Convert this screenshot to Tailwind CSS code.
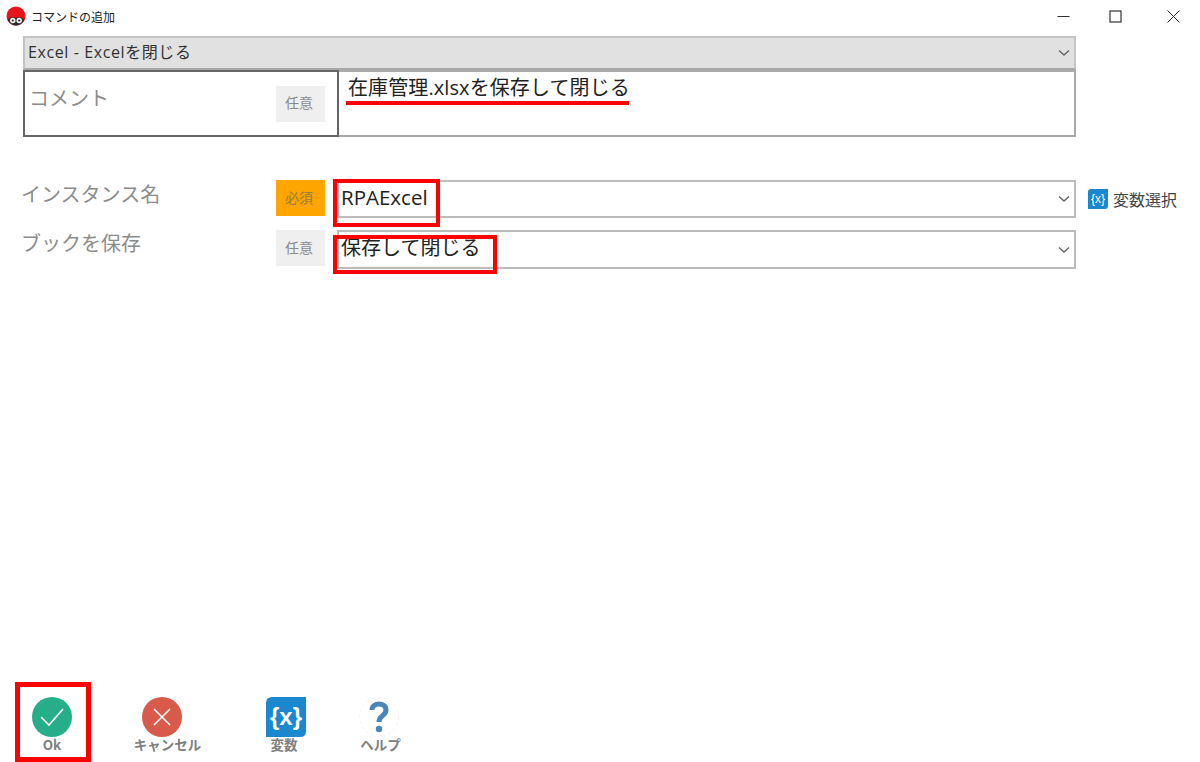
<!DOCTYPE html>
<html lang="ja">
<head>
<meta charset="UTF-8">
<title>コマンドの追加</title>
<script src="https://cdn.jsdelivr.net/npm/@tailwindcss/browser@4"></script>
</head>
<body class="bg-white overflow-hidden font-['Noto_Sans_CJK_JP','Noto_Sans',sans-serif]">
<div class="relative w-[1200px] h-[762px] flex flex-col">

  <!-- title bar -->
  <div class="h-[36px] flex items-start shrink-0">
    <svg class="ml-[6px] mt-[6px]" width="20" height="20" viewBox="0 0 20 20">
      <circle cx="10" cy="10" r="9.5" fill="#e8141c"/>
      <path d="M2 14C4 10.5 7 10.5 10 12C13 10.5 16 10.5 18 14C16.5 18 13 19.5 10 19.5C7 19.5 3.5 18 2 14Z" fill="#2b2b2b"/>
      <circle cx="6.8" cy="14.5" r="2.7" fill="#fff"/><circle cx="13.2" cy="14.5" r="2.7" fill="#fff"/>
      <circle cx="6.8" cy="14.5" r="1.1" fill="#222"/><circle cx="13.2" cy="14.5" r="1.1" fill="#222"/>
    </svg>
    <span class="ml-[5px] mt-[8px] text-[12px] leading-[18px] text-[#222]">コマンドの追加</span>
    <div class="ml-auto flex items-start">
      <svg class="mt-[10px] mr-[39px]" width="13" height="13" viewBox="0 0 13 13"><path d="M0.5 6.5H12.5" stroke="#333" stroke-width="1" fill="none"/></svg>
      <svg class="mt-[10px] mr-[45px]" width="13" height="13" viewBox="0 0 13 13"><rect x="1" y="1" width="11" height="11" stroke="#333" stroke-width="1.2" fill="none"/></svg>
      <svg class="mt-[10px] mr-[20px]" width="13" height="13" viewBox="0 0 13 13"><path d="M0.5 0.5L12.5 12.5M12.5 0.5L0.5 12.5" stroke="#333" stroke-width="1" fill="none"/></svg>
    </div>
  </div>

  <!-- command select -->
  <div class="ml-[23px] w-[1053px] h-[34px] bg-[#e1e1e1] border-2 border-[#c4c4c4] border-b-[#a8a8a8] flex items-center justify-between pl-[3px] pr-[4px] shrink-0">
    <span class="text-[16px] tracking-[0.6px] text-[#333] leading-none mb-[3px] font-['Open_Sans','Noto_Sans_CJK_JP',sans-serif]">Excel - Excelを閉じる</span>
    <svg width="12" height="8" viewBox="0 0 12 8"><path d="M1 1.5L6 6L11 1.5" stroke="#666" stroke-width="1.4" fill="none"/></svg>
  </div>

  <!-- comment -->
  <div class="ml-[23px] w-[1053px] h-[67px] flex shrink-0">
    <div class="w-[316px] border-2 border-[#666] flex items-start justify-between pr-[12px]">
      <span class="ml-[4px] mt-[12px] text-[20px] leading-[28px] text-[#8c8c8c]">コメント</span>
      <span class="mt-[14px] w-[49px] h-[36px] pr-[3px] pb-[3px] bg-[#efefef] text-[#8a8a8a] text-[14px] flex items-center justify-center">任意</span>
    </div>
    <div class="flex-1 border-2 border-l-0 border-[#aaa] pl-[9px] pt-[1px] text-[20px] tracking-[0.1px] leading-[30px] text-[#222] font-['Open_Sans','Noto_Sans_CJK_JP',sans-serif]">在庫管理.xlsxを保存して閉じる</div>
  </div>

  <!-- parameters -->
  <div class="ml-[21px] mt-[43px] flex flex-col gap-[12px] shrink-0">
    <div class="flex items-start">
      <span class="w-[255px] text-[20px] leading-[28px] text-[#8c8c8c]">インスタンス名</span>
      <span class="w-[49px] h-[36px] pr-[3px] pb-[1px] bg-[#ffa500] text-[#9a7a3a] text-[14px] flex items-center justify-center">必須</span>
      <div class="ml-[12px] w-[739px] h-[38px] border-2 border-[#bbb] flex items-center justify-between pl-[2px] pr-[4px]">
        <span class="text-[20.5px] leading-none mb-[4px] text-[#222] font-['Open_Sans',sans-serif]">RPAExcel</span>
        <svg width="12" height="8" viewBox="0 0 12 8"><path d="M1 1.5L6 6L11 1.5" stroke="#666" stroke-width="1.4" fill="none"/></svg>
      </div>
      <div class="ml-[12px] mt-[8px] flex items-center">
        <svg width="20" height="20" viewBox="0 0 20 20"><path d="M3 0H20V17Q20 20 17 20H0V3Q0 0 3 0Z" fill="#1a87cf"/><text x="10" y="14" text-anchor="middle" font-size="12" fill="#fff" font-family="Liberation Sans">{x}</text></svg>
        <span class="ml-[5px] text-[16px] leading-[22px] text-[#444]">変数選択</span>
      </div>
    </div>
    <div class="flex items-start">
      <span class="w-[255px] text-[20px] leading-[28px] text-[#8c8c8c] -mt-[1px] mb-[1px]">ブックを保存</span>
      <span class="w-[49px] h-[36px] pr-[3px] pb-[1px] bg-[#efefef] text-[#8a8a8a] text-[14px] flex items-center justify-center">任意</span>
      <div class="ml-[12px] w-[739px] h-[39px] border-2 border-[#bbb] flex items-center justify-between pl-[2px] pr-[4px]">
        <span class="text-[20px] leading-none mb-[6px] text-[#222]">保存して閉じる</span>
        <svg width="12" height="8" viewBox="0 0 12 8"><path d="M1 1.5L6 6L11 1.5" stroke="#666" stroke-width="1.4" fill="none"/></svg>
      </div>
    </div>
  </div>

  <!-- bottom buttons -->
  <div class="mt-auto h-[65px] flex items-start text-[13.5px] font-bold text-[#808080] shrink-0">
    <div class="ml-[22px] w-[60px] flex flex-col items-center">
      <svg width="40" height="40" viewBox="0 0 40 40"><circle cx="20" cy="20" r="20" fill="#25ae88"/><path d="M9 20L17 28L31 12" stroke="#fff" stroke-width="1.6" fill="none"/></svg>
      <span class="leading-[16px] -mt-[1px]">Ok</span>
    </div>
    <div class="ml-[50px] w-[60px] flex flex-col items-center">
      <svg width="40" height="40" viewBox="0 0 40 40"><circle cx="20" cy="20" r="20" fill="#d75a4a"/><path d="M12 12L28 28M28 12L12 28" stroke="#fff" stroke-width="1.6" fill="none"/></svg>
      <span class="leading-[16px] -mt-[1px] ml-[11px] whitespace-nowrap">キャンセル</span>
    </div>
    <div class="ml-[74px] w-[40px] flex flex-col items-center">
      <svg width="40" height="40" viewBox="0 0 40 40"><path d="M6 0H40V34Q40 40 34 40H0V6Q0 0 6 0Z" fill="#1a87cf"/><text x="20" y="28" text-anchor="middle" font-size="24" font-weight="bold" fill="#fff" font-family="Liberation Sans">{x}</text></svg>
      <span class="leading-[16px] -mt-[1px] mr-[4px]">変数</span>
    </div>
    <div class="ml-[53px] w-[40px] flex flex-col items-center">
      <svg width="40" height="40" viewBox="0 0 40 40"><circle cx="20" cy="20" r="19.5" fill="none" stroke="#f2f2f2" stroke-dasharray="3 3"/><path d="M13 13C13 5 27 5 27 13C27 19 20 18 20 25" stroke="#4a86b8" stroke-width="5" fill="none"/><circle cx="20" cy="32" r="3.2" fill="#4a86b8"/></svg>
      <span class="leading-[16px] -mt-[1px] ml-[3px] whitespace-nowrap">ヘルプ</span>
    </div>
  </div>

  <!-- red annotations drawn over the screenshot -->
  <div class="absolute left-[346px] top-[101px] w-[283px] h-[4px] bg-[#ff0000]"></div>
  <div class="absolute left-[333px] top-[179px] w-[107px] h-[48px] border-[4px] border-[#ff0000]"></div>
  <div class="absolute left-[333px] top-[235px] w-[164px] h-[39px] border-[4px] border-[#ff0000]"></div>
  <div class="absolute left-[15px] top-[682px] w-[76px] h-[80px] border-[5px] border-[#ff0000]"></div>
</div>
</body>
</html>
